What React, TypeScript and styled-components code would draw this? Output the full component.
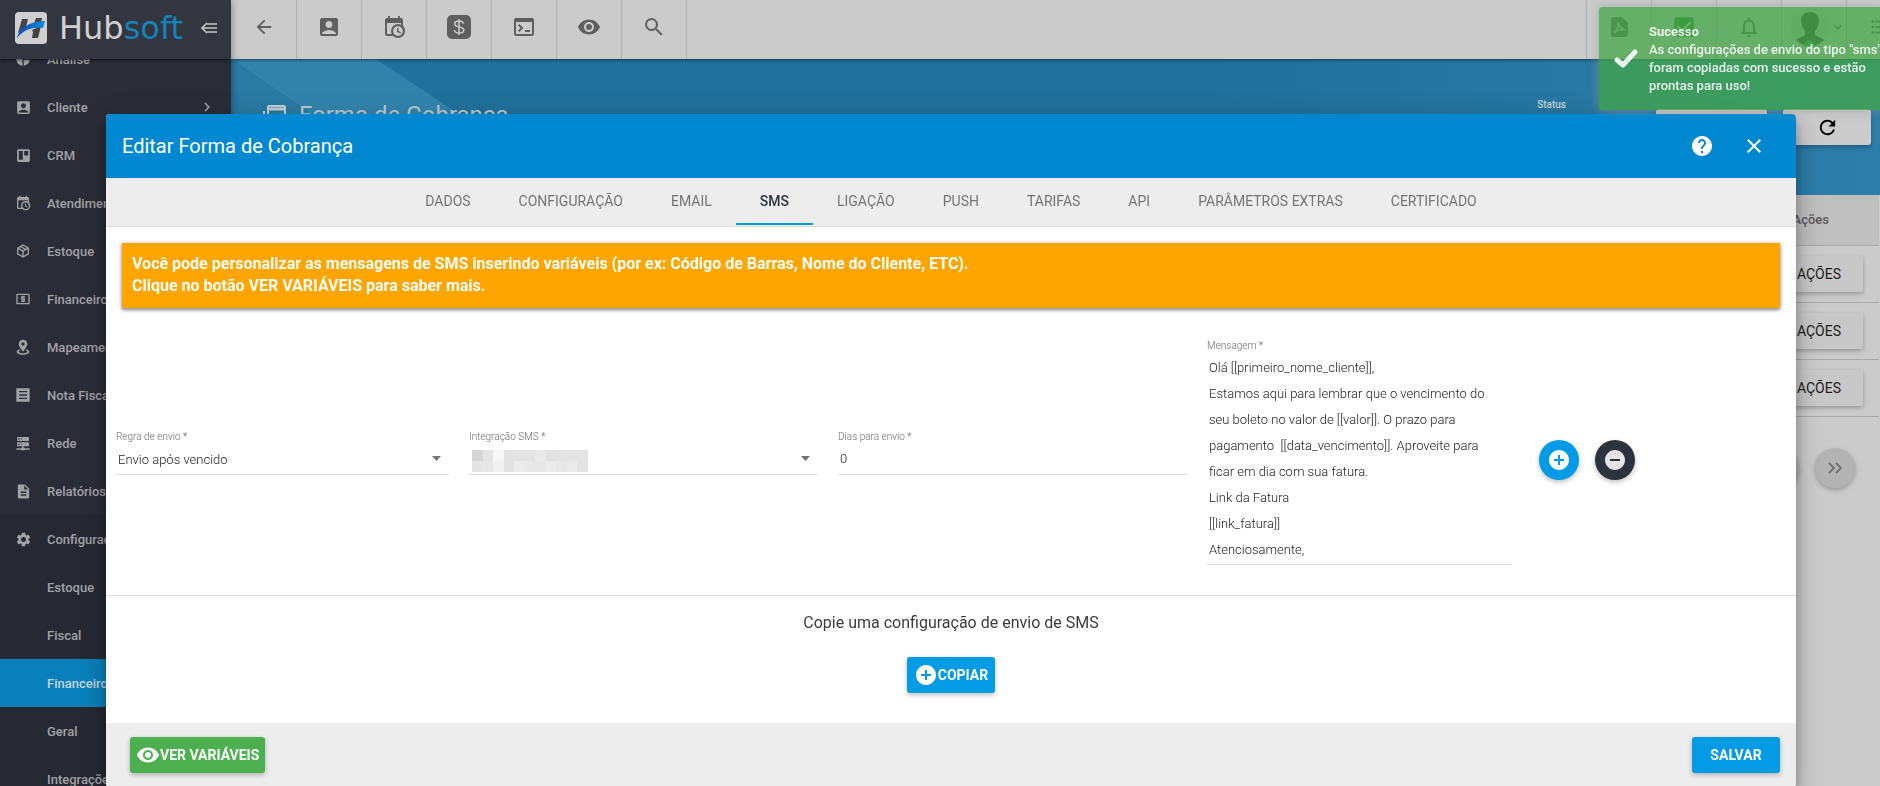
import React from "react";
import styled, { createGlobalStyle } from "styled-components";
import {
  MdAccountBox,
  MdAddCircle,
  MdArrowBack,
  MdCheckBox,
  MdChevronRight,
  MdClose,
  MdDescription,
  MdFormatListBulleted,
  MdHelp,
  MdKeyboardArrowDown,
  MdNotificationsNone,
  MdPieChart,
  MdRefresh,
  MdRemoveCircle,
  MdSearch,
  MdSettings,
  MdVisibility,
} from "react-icons/md";

const GlobalStyle = createGlobalStyle`
  * { box-sizing: border-box; }
  body { margin: 0; font-family: Roboto, "Liberation Sans", sans-serif; font-size: 14px; color: #212121; }
  button, input, select, textarea { font-family: inherit; }
  button { border: 0; padding: 0; cursor: pointer; }
  h1, h2, p, ul { margin: 0; padding: 0; }
  svg { display: block; flex: none; }
`;

/* ---------- icons ---------- */

const paths = {
  calendarClock:
    "M15,13H16.5V15.82L18.94,17.23L18.19,18.53L15,16.69V13M19,8H5V19H9.67C9.24,18.09 9,17.07 9,16A7,7 0 0,1 16,9C17.07,9 18.09,9.24 19,9.67V8M5,21C3.89,21 3,20.1 3,19V5C3,3.89 3.89,3 5,3H6V1H8V3H16V1H18V3H19A2,2 0 0,1 21,5V11.1C22.24,12.36 23,14.09 23,16A7,7 0 0,1 16,23C14.09,23 12.36,22.24 11.1,21H5M16,11.15A4.85,4.85 0 0,0 11.15,16C11.15,18.68 13.32,20.85 16,20.85A4.85,4.85 0 0,0 20.85,16C20.85,13.32 18.68,11.15 16,11.15Z",
  board: "M5,3H19A2,2 0 0,1 21,5V19A2,2 0 0,1 19,21H5A2,2 0 0,1 3,19V5A2,2 0 0,1 5,3M5.5,5.5V18H11V5.5H5.5M13,5.5V12H18.5V5.5Z",
  box: "M21,16.5C21,16.88 20.79,17.21 20.47,17.38L12.57,21.82C12.41,21.94 12.21,22 12,22C11.79,22 11.59,21.94 11.43,21.82L3.53,17.38C3.21,17.21 3,16.88 3,16.5V7.5C3,7.12 3.21,6.79 3.53,6.62L11.43,2.18C11.59,2.06 11.79,2 12,2C12.21,2 12.41,2.06 12.57,2.18L20.47,6.62C20.79,6.79 21,7.12 21,7.5V16.5M12,4.15L10.11,5.22L16,8.61L17.96,7.5L12,4.15M6.04,7.5L12,10.85L13.96,9.75L8.08,6.35L6.04,7.5M5,15.91L11,19.29V12.58L5,9.21V15.91M19,15.91V9.21L13,12.58V19.29L19,15.91Z",
  cash: "M3,4H21A1,1 0 0,1 22,5V19A1,1 0 0,1 21,20H3A1,1 0 0,1 2,19V5A1,1 0 0,1 3,4M4,6V18H20V6ZM11,17V16H9V14H13V13H10A1,1 0 0,1 9,12V9A1,1 0 0,1 10,8H11V7H13V8H15V10H11V11H14A1,1 0 0,1 15,12V15A1,1 0 0,1 14,16H13V17Z",
  pin: "M12,1A6.5,6.5 0 0,1 18.500,7.500C18.500,11.500 12,19 12,19C12,19 5.500,11.500 5.500,7.500A6.500,6.500 0 0,1 12,1M12,5A2.500,2.500 0 0,0 12,10A2.500,2.500 0 0,0 12,5M7,15.200L8.200,17C6.500,17.500 5.500,18.300 5.500,19C5.500,20.200 8,21.200 12,21.200S18.500,20.200 18.500,19C18.500,18.300 17.500,17.500 15.800,17L17,15.200C19.500,16 21.500,17.500 21.500,19.200C21.500,21.800 17.500,23.600 12,23.600S2.500,21.800 2.500,19.200C2.500,17.500 4.500,16 7,15.200Z",
  note: "M2,2H22V22H2ZM6,6V8H18V6ZM6,11V13H18V11ZM6,16V18H18V16Z",
  server:
    "M13,19H14A1,1 0 0,1 15,20H22V22H15A1,1 0 0,1 14,23H10A1,1 0 0,1 9,22H2V20H9A1,1 0 0,1 10,19H11V17H4A1,1 0 0,1 3,16V12A1,1 0 0,1 4,11H20A1,1 0 0,1 21,12V16A1,1 0 0,1 20,17H13V19M4,3H20A1,1 0 0,1 21,4V8A1,1 0 0,1 20,9H4A1,1 0 0,1 3,8V4A1,1 0 0,1 4,3M9,7H10V5H9V7M9,15H10V13H9V15M5,5V7H7V5H5M5,13V15H7V13H5Z",
  console:
    "M4,3H20A2,2 0 0,1 22,5V19A2,2 0 0,1 20,21H4A2,2 0 0,1 2,19V5A2,2 0 0,1 4,3M4,7V19H20V7ZM7.400,9L11.400,13L7.400,17L6,15.600L8.600,13L6,10.400ZM13,15H18V17H13Z",
};

const Glyph = ({ d, size }: { d: string; size: number }) => (
  <svg width={size} height={size} viewBox="0 0 24 24" fill="currentColor" aria-hidden="true">
    <path fillRule="evenodd" d={d} />
  </svg>
);

const LogoMark = () => (
  <svg width="32" height="32" viewBox="0 0 32 32" aria-hidden="true">
    <defs>
      <linearGradient id="swoosh" x1="0" y1="0" x2="1" y2="0">
        <stop offset="0" stopColor="#0a49c4" />
        <stop offset="1" stopColor="#0c8fd6" />
      </linearGradient>
    </defs>
    <rect width="32" height="32" rx="4" fill="#cfcfcf" />
    <path d="M7 7h6l-2 8-8 6zM21 6h6l-1 4-7 2zM17 18l9-4-3 12h-6l1-6z" fill="#444" />
    <path d="M2 26C5 14 18 9 30 9l-2 7C18 15 9 17 2 26z" fill="url(#swoosh)" />
  </svg>
);

const CollapseIcon = () => (
  <svg width="17" height="12" viewBox="0 0 17 12" stroke="#c4c4c4" strokeWidth="1.600" fill="none" aria-hidden="true">
    <path d="M6 1L1 6l5 5M1 6h15M6 2h10M6 10h10M6 6h10" />
  </svg>
);

const MoneyIcon = () => (
  <svg width="24" height="24" viewBox="0 0 24 24" fill="none" aria-hidden="true">
    <rect width="24" height="24" rx="5" fill="#5f5f5f" />
    <path
      d="M16.500 8.500C16 6.800 14.500 6 12 6S7.800 7 7.800 8.900c0 4.100 9 1.900 9 6 0 2-1.900 3.100-4.700 3.100-2.700 0-4.500-1-4.800-3M12 4v16"
      stroke="#cbcbcb"
      strokeWidth="1.500"
    />
  </svg>
);

const PdfIcon = () => (
  <svg width="17" height="20" viewBox="0 0 17 20" aria-hidden="true">
    <path d="M2 0h9l6 6v12a2 2 0 0 1-2 2H2a2 2 0 0 1-2-2V2a2 2 0 0 1 2-2z" fill="#5f5f5f" />
    <path d="M7 5c1 5 3 7 7 8-4-1-7 0-11 3 3-3 5-7 4-11z" stroke="#cbcbcb" strokeWidth="1.300" fill="none" />
  </svg>
);

const Avatar = () => (
  <svg width="40" height="40" viewBox="0 0 40 40" aria-hidden="true">
    <circle cx="20" cy="20" r="20" fill="#c0c0c0" />
    <path
      d="M20 5c6 0 9 4 9 9 0 4-2 8-4 10v4c3 2 7 3 9 5A20 20 0 0 1 6 33c2-2 6-3 9-5v-4c-2-2-4-6-4-10 0-5 3-9 9-9z"
      fill="#3f3f3f"
    />
    <path d="M14 39a6 6 0 0 1 12 0z" fill="#388e3c" />
  </svg>
);

const PaymentIcon = () => (
  <svg width="24" height="20" viewBox="0 0 24 20" fill="none" stroke="#c3cdd3" strokeWidth="2" aria-hidden="true">
    <rect x="5" y="1" width="17" height="13" rx="1" />
    <path d="M5 4h17" strokeWidth="3" />
    <path d="M1 6v13h18" />
  </svg>
);

const CheckIcon = () => (
  <svg width="24" height="19" viewBox="0 0 24 19" fill="none" aria-hidden="true">
    <path d="M3 11l6 5L21 3" stroke="currentColor" strokeWidth="5" strokeLinecap="round" strokeLinejoin="round" />
  </svg>
);

const DoubleChevron = () => (
  <svg width="14" height="12" viewBox="0 0 14 12" fill="none" stroke="#6f6f6f" strokeWidth="1.800" aria-hidden="true">
    <path d="M1 1l5 5-5 5M8 1l5 5-5 5" />
  </svg>
);

/* ---------- application shell ---------- */

const Shell = styled.div`
  display: flex;
  height: 100vh;
  overflow: hidden;
  background: #cbcbcb;
`;

const Sidebar = styled.aside`
  display: flex;
  flex-direction: column;
  flex: none;
  width: 231px;
  overflow: hidden;
  background: #2a2c37;
  color: #a2a2a5;
  box-shadow: 0 0 8px rgba(0, 0, 0, 0.4);
  z-index: 2;
`;

const Brand = styled.div`
  display: flex;
  align-items: center;
  flex: none;
  height: 59px;
  padding: 0 13px 4px 15px;
  background: #33363f;
  box-shadow: 0 1px 3px rgba(0, 0, 0, 0.6);
  z-index: 1;
`;

const Wordmark = styled.span`
  flex: 1;
  margin-left: 12px;
  font-family: "DejaVu Sans", sans-serif;
  font-size: 32px;
  line-height: 32px;
  color: #d0d0d0;

  b {
    font-weight: 400;
    color: #1482bb;
  }
`;

const PlainButton = styled.button`
  display: flex;
  background: none;
  color: inherit;
`;

/* The menu is scrolled part of the way through its first item. */
const Menu = styled.ul`
  list-style: none;
  margin-top: -24px;
`;

const MenuItem = styled.li<{ $tone?: "group" | "active" }>`
  background: ${(p) => (p.$tone === "active" ? "#0a80bb" : p.$tone === "group" ? "#262932" : "transparent")};
  color: ${(p) => (p.$tone === "active" ? "#c3d6e0" : "inherit")};
`;

const MenuLink = styled.a`
  display: grid;
  grid-template-columns: 16px 1fr 16px;
  align-items: center;
  gap: 16px;
  height: 48px;
  padding: 0 17px 0 15px;
  color: inherit;
  font-size: 13px;
  font-weight: 500;
  text-decoration: none;
`;

const Main = styled.main`
  display: flex;
  flex-direction: column;
  flex: 1;
  min-width: 0;
`;

const Toolbar = styled.header`
  display: flex;
  flex: none;
  height: 59px;
  padding-left: 1px;
  background: #cbcbcb;
  color: #5f5f5f;
  box-shadow: 0 1px 3px rgba(0, 0, 0, 0.5);
  z-index: 1;
`;

const ToolButton = styled.button`
  display: flex;
  align-items: center;
  justify-content: center;
  width: 65px;
  padding-bottom: 5px;
  background: none;
  color: inherit;
  border-right: 1px solid #b0b0b0;
`;

const ToolGroup = styled.div`
  display: flex;
  margin-left: auto;
  border-left: 1px solid #b0b0b0;
`;

const ProfileButton = styled(ToolButton)`
  justify-content: flex-end;
`;

const ToolEdge = styled(ToolButton)`
  justify-content: flex-start;
  width: 33px;
  padding-left: 22px;
  overflow: hidden;
  border-right: 0;
`;

const Hero = styled.section`
  position: relative;
  display: flex;
  justify-content: space-between;
  flex: none;
  height: 136px;
  padding: 36px 9px 0 32px;
  background: linear-gradient(90deg, #20719b 60%, #2d7eaa);
`;

const HeroArt = styled.svg`
  position: absolute;
  left: 0;
  top: 0;
`;

const HeroTitle = styled.h1`
  position: relative;
  display: flex;
  align-items: center;
  align-self: flex-start;
  gap: 12px;
  height: 40px;
  font-size: 24px;
  font-weight: 400;
  color: #b9c6cd;
`;

const HeroTools = styled.div`
  display: flex;
  align-items: flex-start;
  gap: 16px;
  padding-top: 14px;
`;

const HeroLabel = styled.span`
  margin: -12px 74px 0 0;
  font-size: 10px;
  line-height: 16px;
  font-weight: 500;
  color: #c8d5dc;
`;

const HeroButton = styled.button<{ $wide?: boolean }>`
  display: flex;
  align-items: center;
  justify-content: center;
  width: ${(p) => (p.$wide ? 111 : 88)}px;
  height: 36px;
  border-radius: 3px;
  background: #cbcbcb;
  box-shadow: 0 2px 5px rgba(0, 0, 0, 0.26);
`;

const TableArea = styled.section`
  flex: 1;
  margin-right: 1px;
  background: #cbcbcb;
`;

const Table = styled.table`
  width: 100%;
  border-collapse: collapse;

  th {
    height: 50px;
    padding: 0 50px 0 0;
    background: #bfbfbf;
    color: #5a5a5a;
    font-size: 13px;
    font-weight: 500;
    text-align: right;
  }

  td {
    height: 57px;
    padding: 0 16px 0 0;
    border-top: 1px solid #a9a9a9;
    border-bottom: 1px solid #a9a9a9;
  }
`;

const RowButton = styled.button`
  display: block;
  margin-left: auto;
  width: 88px;
  height: 36px;
  border-radius: 3px;
  background: #c8c8c8;
  color: #1c1c1c;
  font-size: 14px;
  font-weight: 400;
  box-shadow: 0 2px 5px rgba(0, 0, 0, 0.26);
`;

const Pager = styled.div`
  display: flex;
  justify-content: flex-end;
  gap: 16px;
  padding: 31px 24px;
`;

const PagerButton = styled.button`
  display: flex;
  align-items: center;
  justify-content: center;
  width: 40px;
  height: 40px;
  border-radius: 50%;
  background: #b3b3b3;
  box-shadow: 0 2px 5px rgba(0, 0, 0, 0.26);
`;

/* ---------- dialog ---------- */

const Backdrop = styled.div`
  position: fixed;
  inset: 0;
  z-index: 2;
  padding: 114px 84px 0 106px;
  overflow: hidden;
`;

const Dialog = styled.div`
  border-radius: 4px;
  overflow: hidden;
  background: #fff;
  box-shadow: 0 7px 9px rgba(0, 0, 0, 0.2), 0 14px 21px 2px rgba(0, 0, 0, 0.14), 0 5px 26px 4px rgba(0, 0, 0, 0.12);
`;

const DialogHeader = styled.header`
  display: flex;
  align-items: center;
  gap: 28px;
  height: 64px;
  padding: 0 30px 0 16px;
  background: #0288d1;
  color: #fff;
`;

const DialogTitle = styled.h2`
  flex: 1;
  font-size: 20px;
  font-weight: 400;
`;

const Tabs = styled.nav`
  display: flex;
  justify-content: center;
  height: 49px;
  background: #ededed;
  border-bottom: 1px solid #dcdcdc;
`;

const Tab = styled.button<{ $active?: boolean }>`
  height: 47px;
  padding: 0 24px;
  background: none;
  border-bottom: 2px solid ${(p) => (p.$active ? "#039be5" : "transparent")};
  color: ${(p) => (p.$active ? "#2d323e" : "#757575")};
  font-size: 14px;
  font-weight: ${(p) => (p.$active ? 500 : 400)};
`;

const Notice = styled.p`
  margin: 16px;
  padding: 10px 10px 11px;
  background: #ffa500;
  color: #fff;
  font-size: 16px;
  line-height: 22px;
  font-weight: 700;
  box-shadow: 0 1px 5px rgba(0, 0, 0, 0.3), 0 2px 3px rgba(0, 0, 0, 0.3);
`;

const RuleRow = styled.form`
  display: grid;
  grid-template-columns: 333fr 349fr 349fr 305fr 264fr;
  align-items: center;
  gap: 20px;
  padding: 15px 0 30px 10px;
  border-bottom: 1px solid #dedede;
`;

const Field = styled.div`
  display: flex;
  flex-direction: column;
  min-width: 0;
`;

const Label = styled.label`
  font-size: 10px;
  line-height: 14px;
  font-weight: 300;
  color: #6a6a6a;
`;

const Control = styled.div`
  position: relative;
  display: flex;
  align-items: center;
  height: 31px;
  border-bottom: 1px solid #dedede;
`;

const Select = styled.select`
  appearance: none;
  width: 100%;
  height: 30px;
  padding: 2px 24px 0 2px;
  border: 0;
  background: none;
  color: #212121;
  font-size: 13px;
  font-weight: 300;
`;

const Input = styled.input`
  width: 100%;
  height: 30px;
  padding: 0 2px;
  border: 0;
  background: none;
  color: #212121;
  font-size: 13px;
  font-weight: 300;
`;

const Arrow = styled.svg`
  position: absolute;
  right: 8px;
  pointer-events: none;
`;

const Mosaic = styled.svg`
  position: absolute;
  left: 3px;
  bottom: 2px;
  pointer-events: none;
`;

const TextArea = styled.textarea`
  height: 210px;
  margin-top: 2px;
  padding: 0 16px 0 2px;
  border: 0;
  border-bottom: 1px solid #dedede;
  resize: none;
  overflow: hidden;
  background: none;
  color: #212121;
  font-size: 13px;
  line-height: 26px;
  font-weight: 300;
`;

const Actions = styled.div`
  display: flex;
  gap: 16px;
  padding: 16px 0 0 7px;
`;

const RoundButton = styled.button<{ $dark?: boolean }>`
  display: flex;
  align-items: center;
  justify-content: center;
  width: 40px;
  height: 40px;
  border-radius: 50%;
  background: ${(p) => (p.$dark ? "#2d323e" : "#039be5")};
  color: ${(p) => (p.$dark ? "#e4e4e6" : "#fff")};
  box-shadow: 0 2px 5px rgba(0, 0, 0, 0.26);
`;

const CopySection = styled.section`
  display: flex;
  flex-direction: column;
  align-items: center;
  gap: 22px;
  padding: 15px 0 30px;
`;

const CopyText = styled.p`
  font-size: 16px;
  line-height: 24px;
  font-weight: 400;
  color: #3c3c3c;
`;

const RaisedButton = styled.button<{ $green?: boolean }>`
  display: flex;
  align-items: center;
  justify-content: center;
  min-width: 88px;
  height: 36px;
  padding: 0 6px;
  border-radius: 3px;
  background: ${(p) => (p.$green ? "#4caf50" : "#039be5")};
  color: #fff;
  font-size: 14px;
  font-weight: 700;
  box-shadow: 0 2px 5px rgba(0, 0, 0, 0.26);
`;

const DialogFooter = styled.footer`
  display: flex;
  justify-content: space-between;
  padding: 14px 16px 14px 24px;
  background: #ededed;
`;

/* ---------- toast ---------- */

const Toast = styled.div`
  position: fixed;
  top: 7px;
  right: 0;
  z-index: 3;
  display: flex;
  align-items: center;
  gap: 11px;
  width: 281px;
  height: 103px;
  padding-left: 15px;
  border-radius: 3px 0 0 3px;
  background: rgba(67, 165, 71, 0.75);
  color: rgba(255, 255, 255, 0.88);
  box-shadow: 0 0 12px rgba(153, 153, 153, 0.6);
  font-size: 13px;
  line-height: 18px;
  font-weight: 500;
  white-space: nowrap;
`;

const mosaicRows = [
  ["#d6d6d6", "#e4e4e4", "#f7f7f7", "#e2e2e2", "#e3e3e3", "#e3e3e3", "#eaeaea", "#e2e2e2", "#e3e3e3", "#e3e3e3", "#e3e3e3"],
  ["#e4e4e4", "#e6e6e6", "#f0f0f0", "#e2e2e2", "#ececec", "#e7e7e7", "#e7e7e7", "#ebebeb", "#e7e7e7", "#eaeaea", "#e3e3e3"],
];

type Entry = { label: string; icon?: React.ReactNode; tone?: "group" | "active"; open?: boolean };

const menu: Entry[] = [
  { label: "Análise", icon: <MdPieChart size={16} /> },
  { label: "Cliente", icon: <MdAccountBox size={17} />, open: true },
  { label: "CRM", icon: <Glyph d={paths.board} size={17} /> },
  { label: "Atendimento", icon: <Glyph d={paths.calendarClock} size={16} /> },
  { label: "Estoque", icon: <Glyph d={paths.box} size={16} /> },
  { label: "Financeiro", icon: <Glyph d={paths.cash} size={16} /> },
  { label: "Mapeamento", icon: <Glyph d={paths.pin} size={16} /> },
  { label: "Nota Fiscal", icon: <Glyph d={paths.note} size={16} /> },
  { label: "Rede", icon: <Glyph d={paths.server} size={16} /> },
  { label: "Relatórios", icon: <MdDescription size={17} /> },
  { label: "Configurações", icon: <MdSettings size={17} />, tone: "group" },
  { label: "Estoque", tone: "group" },
  { label: "Fiscal", tone: "group" },
  { label: "Financeiro", tone: "active" },
  { label: "Geral", tone: "group" },
  { label: "Integrações", tone: "group" },
];

const tabs = ["DADOS", "CONFIGURAÇÃO", "EMAIL", "SMS", "LIGAÇÃO", "PUSH", "TARIFAS", "API", "PARÂMETROS EXTRAS", "CERTIFICADO"];

const message = `Olá [[primeiro_nome_cliente]],
Estamos aqui para lembrar que o vencimento do seu boleto no valor de [[valor]]. O prazo para pagamento  [[data_vencimento]]. Aproveite para ficar em dia com sua fatura.
Link da Fatura
[[link_fatura]]
Atenciosamente,`;

const DropArrow = () => (
  <Arrow width="9" height="5" viewBox="0 0 9 5" aria-hidden="true">
    <path d="M0 0h9L4.500 5z" fill="#757575" />
  </Arrow>
);

export default function App() {
  return (
    <>
      <GlobalStyle />
      <Shell>
        <Sidebar>
          <Brand>
            <LogoMark />
            <Wordmark>
              Hub<b>soft</b>
            </Wordmark>
            <PlainButton aria-label="Recolher menu">
              <CollapseIcon />
            </PlainButton>
          </Brand>
          <Menu>
            {menu.map((m, i) => (
              <MenuItem key={i} $tone={m.tone}>
                <MenuLink href="#">
                  <span>{m.icon}</span>
                  {m.label}
                  {m.open && <MdChevronRight size={18} />}
                </MenuLink>
              </MenuItem>
            ))}
          </Menu>
        </Sidebar>

        <Main>
          <Toolbar>
            <ToolButton aria-label="Voltar"><MdArrowBack size={22} /></ToolButton>
            <ToolButton aria-label="Clientes"><MdAccountBox size={24} /></ToolButton>
            <ToolButton aria-label="Agenda"><Glyph d={paths.calendarClock} size={24} /></ToolButton>
            <ToolButton aria-label="Financeiro"><MoneyIcon /></ToolButton>
            <ToolButton aria-label="Console"><Glyph d={paths.console} size={24} /></ToolButton>
            <ToolButton aria-label="Visualizar"><MdVisibility size={24} /></ToolButton>
            <ToolButton aria-label="Buscar"><MdSearch size={24} /></ToolButton>
            <ToolGroup>
              <ToolButton aria-label="PDF"><PdfIcon /></ToolButton>
              <ToolButton aria-label="Tarefas"><MdCheckBox size={26} color="#2e7d32" /></ToolButton>
              <ToolButton aria-label="Notificações"><MdNotificationsNone size={24} /></ToolButton>
              <ProfileButton aria-label="Perfil">
                <Avatar />
                <MdKeyboardArrowDown size={16} />
              </ProfileButton>
              <ToolEdge aria-label="Atalhos"><MdFormatListBulleted size={22} /></ToolEdge>
            </ToolGroup>
          </Toolbar>

          <Hero>
            <HeroArt width="480" height="136" viewBox="0 0 480 136" aria-hidden="true">
              <path d="M0 0h145l205 136H200z" fill="#3284ad" />
              <path d="M0 0l200 136H0z" fill="#2a7aa4" />
            </HeroArt>
            <HeroTitle>
              <PaymentIcon />
              Forma de Cobrança
            </HeroTitle>
            <HeroTools>
              <HeroLabel>Status</HeroLabel>
              <HeroButton $wide aria-label="Filtrar status" />
              <HeroButton aria-label="Atualizar"><MdRefresh size={23} /></HeroButton>
            </HeroTools>
          </Hero>

          <TableArea>
            <Table>
              <thead>
                <tr><th>Ações</th></tr>
              </thead>
              <tbody>
                {[1, 2, 3].map((n) => (
                  <tr key={n}>
                    <td><RowButton>AÇÕES</RowButton></td>
                  </tr>
                ))}
              </tbody>
            </Table>
            <Pager>
              <PagerButton aria-label="Próxima página" />
              <PagerButton aria-label="Última página"><DoubleChevron /></PagerButton>
            </Pager>
          </TableArea>
        </Main>
      </Shell>

      <Backdrop>
        <Dialog role="dialog" aria-labelledby="dialog-title">
          <DialogHeader>
            <DialogTitle id="dialog-title">Editar Forma de Cobrança</DialogTitle>
            <PlainButton aria-label="Ajuda"><MdHelp size={24} /></PlainButton>
            <PlainButton aria-label="Fechar"><MdClose size={24} /></PlainButton>
          </DialogHeader>
          <Tabs>
            {tabs.map((t) => (
              <Tab key={t} $active={t === "SMS"}>{t}</Tab>
            ))}
          </Tabs>

          <Notice>
            Você pode personalizar as mensagens de SMS inserindo variáveis (por ex: Código de Barras, Nome do Cliente, ETC).
            <br />
            Clique no botão VER VARIÁVEIS para saber mais.
          </Notice>

          <RuleRow onSubmit={(e) => e.preventDefault()}>
            <Field>
              <Label htmlFor="regra">Regra de envio *</Label>
              <Control>
                <Select id="regra"><option>Envio após vencido</option></Select>
                <DropArrow />
              </Control>
            </Field>
            <Field>
              <Label htmlFor="integracao">Integração SMS *</Label>
              <Control>
                <Select id="integracao"><option value="" /></Select>
                <Mosaic width="116" height="22" viewBox="0 0 11 2" preserveAspectRatio="none" shapeRendering="crispEdges" aria-hidden="true">
                  {mosaicRows.map((row, y) => row.map((c, x) => <rect key={`${x}-${y}`} x={x} y={y} width="1" height="1" fill={c} />))}
                </Mosaic>
                <DropArrow />
              </Control>
            </Field>
            <Field>
              <Label htmlFor="dias">Dias para envio *</Label>
              <Control>
                <Input id="dias" defaultValue="0" inputMode="numeric" />
              </Control>
            </Field>
            <Field>
              <Label htmlFor="mensagem">Mensagem *</Label>
              <TextArea id="mensagem" defaultValue={message} />
            </Field>
            <Actions>
              <RoundButton type="button" aria-label="Adicionar"><MdAddCircle size={24} /></RoundButton>
              <RoundButton type="button" $dark aria-label="Remover"><MdRemoveCircle size={24} /></RoundButton>
            </Actions>
          </RuleRow>

          <CopySection>
            <CopyText>Copie uma configuração de envio de SMS</CopyText>
            <RaisedButton><MdAddCircle size={24} />COPIAR</RaisedButton>
          </CopySection>

          <DialogFooter>
            <RaisedButton $green><MdVisibility size={24} />VER VARIÁVEIS</RaisedButton>
            <RaisedButton>SALVAR</RaisedButton>
          </DialogFooter>
        </Dialog>
      </Backdrop>

      <Toast role="status">
        <CheckIcon />
        <div>
          <strong>Sucesso</strong>
          <p>
            As configurações de envio do tipo "sms"
            <br />
            foram copiadas com sucesso e estão
            <br />
            prontas para uso!
          </p>
        </div>
      </Toast>
    </>
  );
}
